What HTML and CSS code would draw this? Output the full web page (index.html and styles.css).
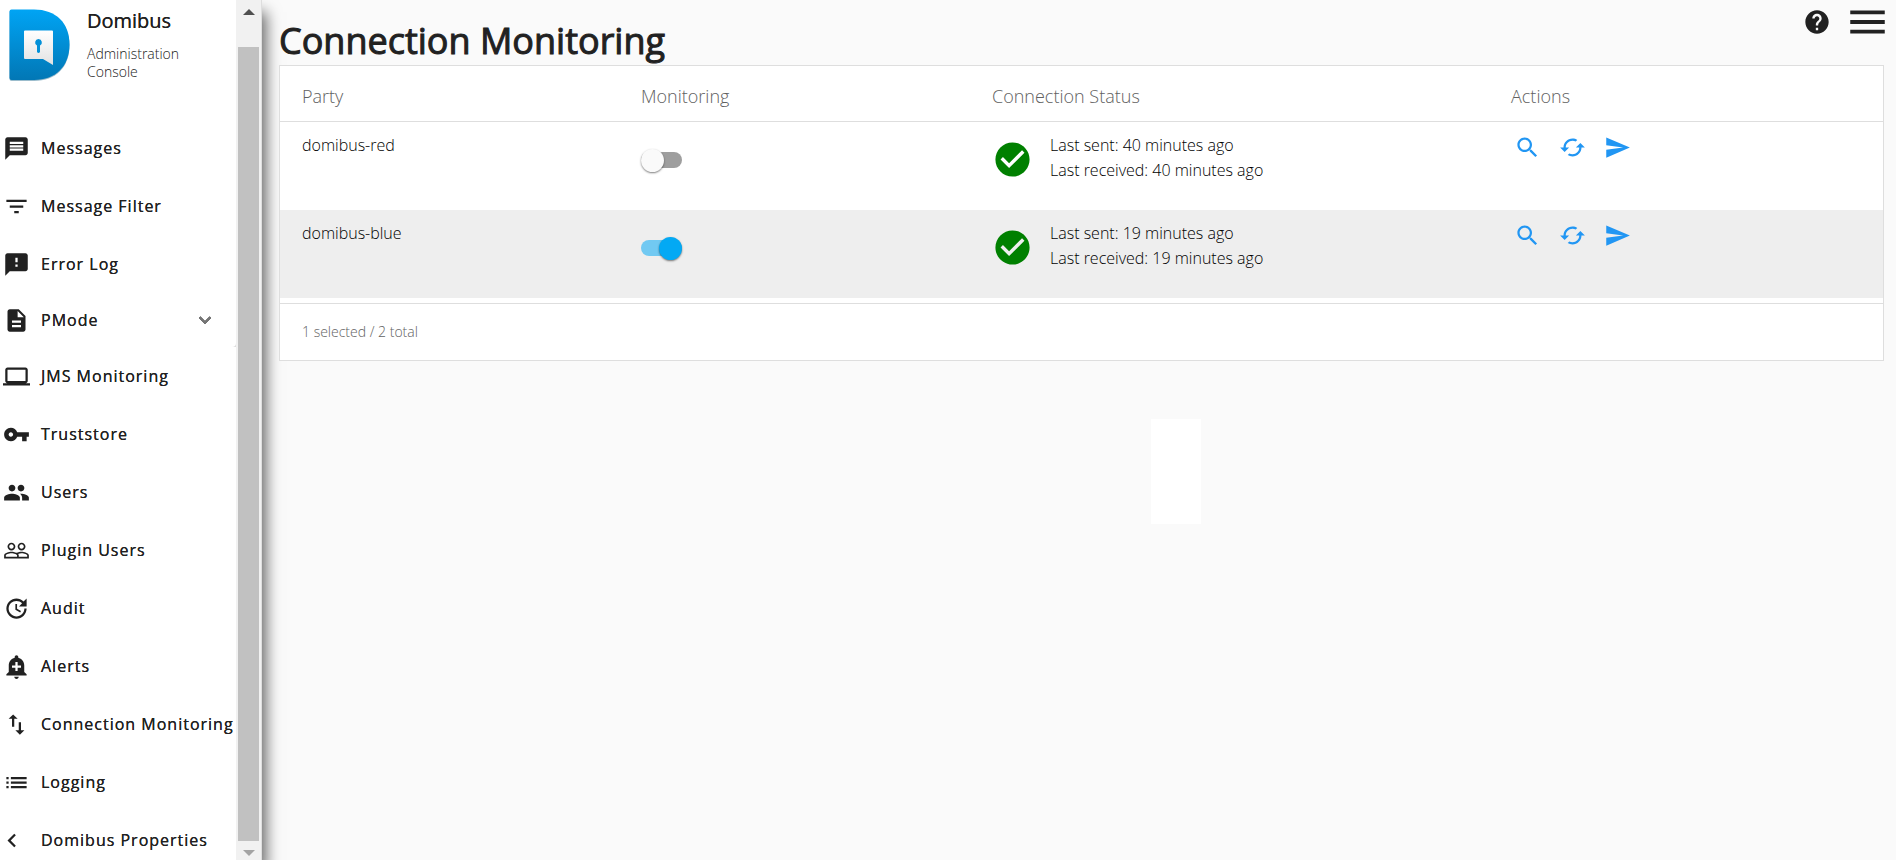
FILE: index.html
```html
<!DOCTYPE html>
<html lang="en">
<head>
    <meta charset="UTF-8">
    <meta name="viewport" content="width=device-width, initial-scale=1.0">
    <title>Domibus - Connection Monitoring</title>
    <link rel="stylesheet" href="styles.css">
</head>
<body>
    <aside class="sidebar">
        <div class="sidebar-content">
            <a class="brand" href="#">
                <svg class="logo" viewBox="0 0 62 73" aria-hidden="true">
                    <defs>
                        <linearGradient id="logoBlue" x1="0" y1="0" x2="0" y2="1">
                            <stop offset="0" stop-color="#00a4f4"/>
                            <stop offset="1" stop-color="#0277b5"/>
                        </linearGradient>
                        <linearGradient id="logoWhite" x1="0" y1="0" x2="0" y2="1">
                            <stop offset="0" stop-color="#ffffff"/>
                            <stop offset="1" stop-color="#e2e2e2"/>
                        </linearGradient>
                    </defs>
                    <path d="M2.500 1.500H25C47 1.500 60.500 15 60.500 36.500S47 72 25 72H2.500Q0.500 72 0.500 70V3Q0.500 1.500 2.500 1.500z" fill="#9bbccc"/>
                    <path d="M2.500 0.500H25C47 0.500 60.500 14 60.500 35.500S47 71 25 71H2.500Q0.500 71 0.500 69V2.500Q0.500 0.500 2.500 0.500z" fill="url(#logoBlue)"/>
                    <path d="M16 21.500H43q1 0 1 1V56L34 50H16q-1 0-1-1V22.500q0-1 1-1z" fill="url(#logoWhite)"/>
                    <path d="M29.500 30a3.500 3.500 0 0 1 1.500 6.600V43q-1.500 2-3 0V36.600A3.500 3.500 0 0 1 29.500 30z" fill="#0290d8"/>
                </svg>
                <span class="brand-text">
                    <span class="brand-name">Domibus</span>
                    <span class="brand-sub">Administration Console</span>
                </span>
            </a>
            <nav>
                <ul class="menu">
                    <li><a href="#"><svg class="icon" viewBox="0 0 24 24"><path d="M20 2H4c-1.100 0-1.990.9-1.990 2L2 22l4-4h14c1.100 0 2-.9 2-2V4c0-1.100-.9-2-2-2zm-2 12H6v-2h12v2zm0-3H6V9h12v2zm0-3H6V6h12v2z"/></svg>Messages</a></li>
                    <li><a href="#"><svg class="icon" viewBox="0 0 24 24"><path d="M10 18h4v-2h-4v2zM3 6v2h18V6H3zm3 7h12v-2H6v2z"/></svg>Message Filter</a></li>
                    <li><a href="#"><svg class="icon" viewBox="0 0 24 24"><path d="M20 2H4c-1.100 0-1.990.9-1.990 2L2 22l4-4h14c1.100 0 2-.9 2-2V4c0-1.100-.9-2-2-2zm-7 12h-2v-2h2v2zm0-4h-2V6h2v4z"/></svg>Error Log</a></li>
                    <li class="expandable">
                        <button type="button" aria-expanded="false"><svg class="icon" viewBox="0 0 24 24"><path d="M14 2H6c-1.100 0-1.990.9-1.990 2L4 20c0 1.100.89 2 1.990 2H18c1.100 0 2-.9 2-2V8l-6-6zm2 16H8v-2h8v2zm0-4H8v-2h8v2zm-3-5V3.500L18.500 9H13z"/></svg>PMode<svg class="chevron" viewBox="0 0 24 24"><path d="M16.590 8.590L12 13.170 7.410 8.590 6 10l6 6 6-6z"/></svg></button>
                    </li>
                    <li><a href="#"><svg class="icon" viewBox="0 0 24 24"><path d="M20 18c1.100 0 1.990-.9 1.990-2L22 6c0-1.100-.9-2-2-2H4c-1.100 0-2 .9-2 2v10c0 1.100.9 2 2 2H0v2h24v-2h-4zM4 6h16v10H4V6z"/></svg>JMS Monitoring</a></li>
                    <li><a href="#"><svg class="icon" viewBox="0 0 24 24"><path d="M12.650 10C11.830 7.670 9.610 6 7 6c-3.310 0-6 2.690-6 6s2.690 6 6 6c2.610 0 4.830-1.670 5.650-4H17v4h4v-4h2v-4H12.650zM7 14c-1.100 0-2-.9-2-2s.9-2 2-2 2 .9 2 2-.9 2-2 2z"/></svg>Truststore</a></li>
                    <li><a href="#"><svg class="icon" viewBox="0 0 24 24"><path d="M16 11c1.660 0 2.990-1.340 2.990-3S17.660 5 16 5c-1.660 0-3 1.340-3 3s1.340 3 3 3zm-8 0c1.660 0 2.990-1.340 2.990-3S9.660 5 8 5C6.340 5 5 6.340 5 8s1.340 3 3 3zm0 2c-2.330 0-7 1.170-7 3.500V19h14v-2.500c0-2.330-4.670-3.500-7-3.500zm8 0c-.29 0-.62.02-.97.05 1.160.84 1.970 1.970 1.970 3.450V19h6v-2.500c0-2.330-4.670-3.500-7-3.500z"/></svg>Users</a></li>
                    <li><a href="#"><svg class="icon" viewBox="0 0 24 24"><path d="M16.500 13c-1.200 0-3.070.34-4.500 1-1.430-.67-3.300-1-4.500-1C5.330 13 1 14.080 1 16.250V19h22v-2.750c0-2.170-4.330-3.250-6.500-3.250zm-4 4.500h-10v-1.250c0-.54 2.560-1.750 5-1.750s5 1.210 5 1.750v1.250zm9 0H14v-1.250c0-.46-.2-.86-.52-1.220.88-.3 1.960-.53 3.020-.53 2.440 0 5 1.210 5 1.750v1.250zM7.500 12c1.930 0 3.500-1.570 3.500-3.500S9.430 5 7.500 5 4 6.570 4 8.500 5.570 12 7.500 12zm0-5.500c1.100 0 2 .9 2 2s-.9 2-2 2-2-.9-2-2 .9-2 2-2zm9 5.500c1.930 0 3.500-1.570 3.500-3.500S18.430 5 16.500 5 13 6.570 13 8.500s1.570 3.500 3.500 3.500zm0-5.500c1.100 0 2 .9 2 2s-.9 2-2 2-2-.9-2-2 .9-2 2-2z"/></svg>Plugin Users</a></li>
                    <li><a href="#"><svg class="icon" viewBox="0 0 24 24"><path d="M21 10.120h-6.780l2.740-2.820c-2.730-2.700-7.150-2.800-9.880-.1-2.730 2.710-2.730 7.080 0 9.790 2.730 2.710 7.150 2.710 9.880 0C18.320 15.650 19 14.080 19 12.100h2c0 1.980-.88 4.550-2.640 6.290-3.510 3.480-9.210 3.480-12.720 0-3.500-3.470-3.530-9.110-.02-12.580 3.510-3.470 9.140-3.470 12.650 0L21 3v7.120zM12.500 8v4.250l3.500 2.080-.72 1.210L11 13V8h1.500z"/></svg>Audit</a></li>
                    <li><a href="#"><svg class="icon" viewBox="0 0 24 24"><path d="M10.010 21.010c0 1.100.89 1.990 1.990 1.990s1.990-.89 1.990-1.990h-3.980zm8.870-4.190V11c0-3.250-2.250-5.970-5.290-6.690v-.72C13.590 2.710 12.880 2 12 2s-1.590.71-1.590 1.590v.72C7.370 5.030 5.120 7.750 5.120 11v5.820L3 18.940V20h18v-1.060l-2.120-2.120zM16 13.010h-3v3h-2v-3H8V11h3V8h2v3h3v2.010z"/></svg>Alerts</a></li>
                    <li><a href="#" aria-current="page"><svg class="icon" viewBox="0 0 24 24"><path d="M16 17.010V10h-2v7.010h-3L15 21l4-3.990h-3zM9 3L5 6.990h3V14h2V6.990h3L9 3z"/></svg>Connection Monitoring</a></li>
                    <li><a href="#"><svg class="icon" viewBox="0 0 24 24"><path d="M3 13h2v-2H3v2zm0 4h2v-2H3v2zm0-8h2V7H3v2zm4 4h14v-2H7v2zm0 4h14v-2H7v2zM7 7v2h14V7H7z"/></svg>Logging</a></li>
                    <li><a href="#"><svg class="icon" viewBox="4 0 24 24"><path d="M15.410 7.410L14 6l-6 6 6 6 1.410-1.410L10.830 12z"/></svg>Domibus Properties</a></li>
                </ul>
            </nav>
        </div>
        <div class="scrollbar" aria-hidden="true">
            <span class="arrow-up"></span>
            <span class="thumb"></span>
            <span class="arrow-down"></span>
        </div>
    </aside>

    <main class="page">
        <header class="page-header">
            <h1>Connection Monitoring</h1>
            <div class="header-tools">
                <button type="button" aria-label="Help"><svg class="help-icon" viewBox="0 0 24 24"><path d="M12 2C6.480 2 2 6.480 2 12s4.480 10 10 10 10-4.480 10-10S17.520 2 12 2zm1 17h-2v-2h2v2zm2.070-7.750l-.9.920C13.450 12.900 13 13.500 13 15h-2v-.5c0-1.100.45-2.100 1.170-2.830l1.240-1.260c.37-.36.590-.86.590-1.410 0-1.100-.9-2-2-2s-2 .9-2 2H8c0-2.210 1.790-4 4-4s4 1.790 4 4c0 .88-.36 1.680-.93 2.250z"/></svg></button>
                <button type="button" aria-label="Menu"><svg class="menu-icon" viewBox="3 0 18 24"><path d="M3 18h18v-2H3v2zm0-5h18v-2H3v2zm0-7v2h18V6H3z"/></svg></button>
            </div>
        </header>

        <section class="card">
            <table>
                <colgroup>
                    <col class="col-party">
                    <col class="col-monitoring">
                    <col class="col-status">
                    <col>
                </colgroup>
                <thead>
                    <tr>
                        <th>Party</th>
                        <th>Monitoring</th>
                        <th>Connection Status</th>
                        <th>Actions</th>
                    </tr>
                </thead>
                <tbody>
                    <tr>
                        <td>domibus-red</td>
                        <td><label class="toggle"><input type="checkbox" aria-label="Monitor domibus-red"></label></td>
                        <td>
                            <div class="status">
                                <svg class="status-icon" viewBox="0 0 24 24"><path d="M12 2C6.480 2 2 6.480 2 12s4.480 10 10 10 10-4.480 10-10S17.520 2 12 2zm-2 15l-5-5 1.410-1.410L10 14.170l7.590-7.590L19 8l-9 9z"/></svg>
                                <div>Last sent: 40 minutes ago<br>Last received: 40 minutes ago</div>
                            </div>
                        </td>
                        <td>
                            <div class="actions">
                                <button type="button" aria-label="Details"><svg class="icon" viewBox="0 0 24 24"><path d="M15.500 14h-.79l-.28-.27C15.410 12.590 16 11.110 16 9.500 16 5.910 13.090 3 9.500 3S3 5.910 3 9.500 5.910 16 9.500 16c1.610 0 3.090-.59 4.230-1.570l.27.28v.79l5 4.990L20.490 19l-4.990-5zm-6 0C7.010 14 5 11.990 5 9.500S7.010 5 9.500 5 14 7.010 14 9.500 11.990 14 9.500 14z"/></svg></button>
                                <button type="button" aria-label="Refresh"><svg class="icon" viewBox="0 0 24 24"><path d="M19 8l-4 4h3c0 3.310-2.690 6-6 6-1.010 0-1.970-.25-2.800-.7l-1.460 1.460C8.970 19.540 10.430 20 12 20c4.420 0 8-3.580 8-8h3l-4-4zM6 12c0-3.310 2.690-6 6-6 1.010 0 1.970.25 2.800.7l1.460-1.460C15.030 4.460 13.570 4 12 4c-4.420 0-8 3.580-8 8H1l4 4 4-4H6z"/></svg></button>
                                <button type="button" aria-label="Send"><svg class="icon" viewBox="0 0 24 24"><path d="M2.010 21L23 12 2.010 3 2 10l15 2-15 2z"/></svg></button>
                            </div>
                        </td>
                    </tr>
                    <tr class="selected">
                        <td>domibus-blue</td>
                        <td><label class="toggle"><input type="checkbox" aria-label="Monitor domibus-blue" checked></label></td>
                        <td>
                            <div class="status">
                                <svg class="status-icon" viewBox="0 0 24 24"><path d="M12 2C6.480 2 2 6.480 2 12s4.480 10 10 10 10-4.480 10-10S17.520 2 12 2zm-2 15l-5-5 1.410-1.410L10 14.170l7.590-7.590L19 8l-9 9z"/></svg>
                                <div>Last sent: 19 minutes ago<br>Last received: 19 minutes ago</div>
                            </div>
                        </td>
                        <td>
                            <div class="actions">
                                <button type="button" aria-label="Details"><svg class="icon" viewBox="0 0 24 24"><path d="M15.500 14h-.79l-.28-.27C15.410 12.590 16 11.110 16 9.500 16 5.910 13.090 3 9.500 3S3 5.910 3 9.500 5.910 16 9.500 16c1.610 0 3.090-.59 4.230-1.570l.27.28v.79l5 4.990L20.490 19l-4.990-5zm-6 0C7.010 14 5 11.990 5 9.500S7.010 5 9.500 5 14 7.010 14 9.500 11.990 14 9.500 14z"/></svg></button>
                                <button type="button" aria-label="Refresh"><svg class="icon" viewBox="0 0 24 24"><path d="M19 8l-4 4h3c0 3.310-2.690 6-6 6-1.010 0-1.970-.25-2.800-.7l-1.460 1.460C8.970 19.540 10.430 20 12 20c4.420 0 8-3.580 8-8h3l-4-4zM6 12c0-3.310 2.690-6 6-6 1.010 0 1.970.25 2.800.7l1.460-1.460C15.030 4.460 13.570 4 12 4c-4.420 0-8 3.580-8 8H1l4 4 4-4H6z"/></svg></button>
                                <button type="button" aria-label="Send"><svg class="icon" viewBox="0 0 24 24"><path d="M2.010 21L23 12 2.010 3 2 10l15 2-15 2z"/></svg></button>
                            </div>
                        </td>
                    </tr>
                </tbody>
            </table>
            <div class="card-footer">1 selected / 2 total</div>
        </section>

        <div class="placeholder"></div>
    </main>
</body>
</html>
```
FILE: styles.css
```css
* {
    box-sizing: border-box;
}
body {
    margin: 0;
    height: 100vh;
    display: flex;
    overflow: hidden;
    background-color: #fafafa;
    color: #212121;
    font-family: 'Open Sans', sans-serif;
    font-size: 16px;
}
button {
    padding: 0;
    border: none;
    background: none;
    color: inherit;
    font: inherit;
    letter-spacing: inherit;
    text-shadow: inherit;
    cursor: pointer;
}
a {
    color: inherit;
    text-decoration: none;
}
svg {
    display: block;
    flex: none;
    fill: currentColor;
}
.icon {
    width: 27px;
    height: 27px;
}

/* Sidebar */
.sidebar {
    flex: none;
    display: flex;
    width: 262px;
    height: 100%;
    background-color: white;
    border-right: 1px solid #dedede;
    box-shadow: 4px 12px 14px rgba(0, 0, 0, 0.6);
}
.sidebar-content {
    flex: 1;
    overflow: hidden;
}
.brand {
    display: flex;
    gap: 16px;
    height: 119px;
    padding: 9px 0 0 9px;
}
.logo {
    width: 62px;
    height: 73px;
}
.brand-text {
    display: flex;
    flex-direction: column;
    width: 110px;
}
.brand-name {
    font-size: 20px;
    font-weight: 500;
    line-height: 24px;
    text-shadow: 0 0 0 #212121;
}
.brand-sub {
    margin-top: 12px;
    font-size: 14px;
    font-weight: 300;
    line-height: 18px;
}
.menu {
    margin: 0;
    padding: 0;
    list-style: none;
    font-weight: 500;
    letter-spacing: 1px;
    white-space: nowrap;
    text-shadow: 0 0 0 #212121;
}
.menu a, .menu button {
    display: flex;
    align-items: center;
    gap: 11px;
    width: 100%;
    height: 58px;
    padding-left: 3px;
}
.menu button {
    height: 54px;
    padding-right: 19px;
    background-color: white;
    border-bottom-right-radius: 4px;
}
.expandable {
    background-color: #dddddd;
}
.chevron {
    width: 24px;
    height: 24px;
    margin-left: auto;
    fill: #757575;
    stroke: #757575;
}
.scrollbar {
    display: flex;
    flex-direction: column;
    align-items: center;
    width: 25px;
    padding: 9px 2px 4px;
    background-color: #f1f1f1;
}
.thumb {
    flex: 1;
    width: 100%;
    margin: 32px 0 9px;
    background-color: #c1c1c1;
}
.arrow-up, .arrow-down {
    border: 6px solid transparent;
}
.arrow-up {
    border-top: none;
    border-bottom-color: #505050;
}
.arrow-down {
    border-bottom: none;
    border-top-color: #a3a3a3;
}

/* Page */
.page {
    flex: 1;
    min-width: 0;
    padding: 0 12px 0 17px;
}
.page-header {
    display: flex;
    justify-content: space-between;
    height: 65px;
}
h1 {
    margin: 17px 0 0;
    font-size: 36px;
    font-weight: 500;
    line-height: 48px;
    -webkit-text-stroke: 1px #212121;
}
.header-tools {
    display: flex;
    align-items: center;
    gap: 19px;
    height: 44px;
    margin-right: -1px;
}
.help-icon {
    width: 28px;
    height: 28px;
}
.menu-icon {
    width: 35px;
    height: 46px;
}

/* Table card */
.card {
    background-color: white;
    border: 1px solid #dedede;
}
table {
    width: 100%;
    table-layout: fixed;
    border-collapse: separate;
    border-spacing: 0;
}
.col-party {
    width: 339px;
}
.col-monitoring {
    width: 351px;
}
.col-status {
    width: 519px;
}
th {
    height: 56px;
    padding: 4px 0 0 22px;
    border-bottom: 1px solid #dedede;
    color: #616161;
    font-size: 18px;
    font-weight: 300;
    text-align: left;
}
td {
    height: 88px;
    padding: 11px 0 0 22px;
    color: black;
    font-weight: 300;
    line-height: 25px;
    vertical-align: top;
}
.selected {
    background-color: #eeeeee;
}
.toggle {
    display: flex;
    align-items: center;
    height: 54px;
}
.toggle input {
    appearance: none;
    display: flex;
    align-items: center;
    width: 41px;
    height: 16px;
    margin: 0;
    border-radius: 8px;
    background-color: #9e9e9e;
}
.toggle input::before {
    content: "";
    width: 23px;
    height: 23px;
    border-radius: 50%;
    background-color: #fafafa;
    box-shadow: 0 1px 2px rgba(0, 0, 0, 0.5);
}
.toggle input:checked {
    justify-content: flex-end;
    background-color: #71c9f2;
}
.toggle input:checked::before {
    background-color: #03a9f4;
}
.status {
    display: flex;
    gap: 17px;
}
.status-icon {
    width: 41px;
    height: 41px;
    margin-top: 6px;
    fill: #008000;
}
.actions {
    display: flex;
    gap: 18px;
    padding: 1px 0 0 3px;
    color: #2196f3;
}
.card-footer {
    height: 57px;
    margin-top: 5px;
    padding-left: 22px;
    border-top: 1px solid #dedede;
    color: #616161;
    font-size: 14px;
    font-weight: 300;
    line-height: 56px;
}
.placeholder {
    width: 50px;
    height: 105px;
    margin: 58px 0 0 872px;
    background-color: white;
}
```
